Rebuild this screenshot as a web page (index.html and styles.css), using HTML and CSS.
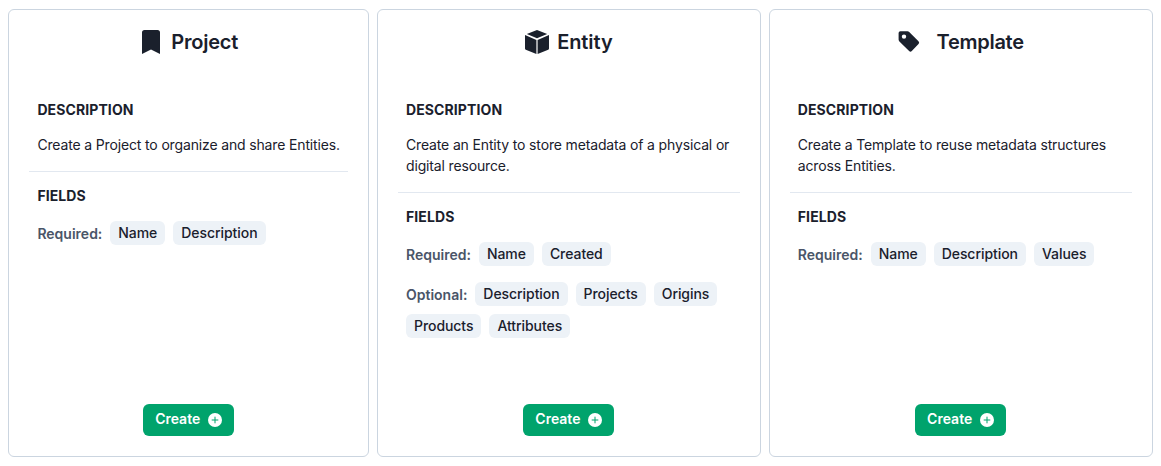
FILE: index.html
```html
<!DOCTYPE html>
<html lang="en">
<head>
<meta charset="utf-8">
<title>Create</title>
<link rel="stylesheet" href="styles.css">
</head>
<body>
<main class="cards">
  <section class="card">
    <header class="card-header">
      <svg class="icon" viewBox="0 0 24 24"><path d="M3 24V2.500Q3 0 5.500 0H18.500Q21 0 21 2.500V24L12 19.500Z"/></svg>
      <h2 class="title">Project</h2>
    </header>
    <div class="body">
      <div class="block">
        <h3 class="label">DESCRIPTION</h3>
        <p class="text">Create a Project to organize and share Entities.</p>
      </div>
      <div class="block">
        <h3 class="label">FIELDS</h3>
        <div class="fields"><span class="kind">Required:</span><span class="tag">Name</span><span class="tag">Description</span></div>
      </div>
    </div>
    <button class="create"><span class="create-text">Create</span><svg class="plus" viewBox="0 0 14 14"><circle cx="7" cy="7" r="7"/><path d="M7 3.700V10.300M3.700 7H10.300"/></svg></button>
  </section>
  <section class="card">
    <header class="card-header">
      <svg class="icon" viewBox="0 0 24 24"><path d="M12 0L22.200 3.900L12 8.300L1.800 3.900ZM0 5L11.400 9.900V24L.8 19.700Q0 19.300 0 18.500ZM24 5V18.500Q24 19.300 23.200 19.700L12.600 24V9.900Z"/></svg>
      <h2 class="title title-entity">Entity</h2>
    </header>
    <div class="body">
      <div class="block">
        <h3 class="label">DESCRIPTION</h3>
        <p class="text">Create an Entity to store metadata of a physical or digital resource.</p>
      </div>
      <div class="block">
        <h3 class="label">FIELDS</h3>
        <div class="fields"><span class="kind">Required:</span><span class="tag">Name</span><span class="tag">Created</span></div>
        <div class="fields"><span class="kind">Optional:</span><span class="tag">Description</span><span class="tag">Projects</span><span class="tag">Origins</span><span class="tag">Products</span><span class="tag">Attributes</span></div>
      </div>
    </div>
    <button class="create"><span class="create-text">Create</span><svg class="plus" viewBox="0 0 14 14"><circle cx="7" cy="7" r="7"/><path d="M7 3.700V10.300M3.700 7H10.300"/></svg></button>
  </section>
  <section class="card">
    <header class="card-header">
      <svg class="icon icon-wide" viewBox="0 0 31 24"><path fill-rule="evenodd" d="M.6 3Q.6 1.200 2.400 1.200H9.500Q10.500 1.200 11.200 1.900L20.500 11.200Q21.900 12.600 20.500 14L13.800 21.100Q12.500 22.400 11.100 21.100L1.400 11.400Q.6 10.600 .6 9.600ZM6 4.400A2.200 2.200 0 1 0 6 8.800A2.200 2.200 0 1 0 6 4.400Z"/></svg>
      <h2 class="title title-template">Template</h2>
    </header>
    <div class="body">
      <div class="block">
        <h3 class="label">DESCRIPTION</h3>
        <p class="text">Create a Template to reuse metadata structures across Entities.</p>
      </div>
      <div class="block">
        <h3 class="label">FIELDS</h3>
        <div class="fields"><span class="kind">Required:</span><span class="tag">Name</span><span class="tag">Description</span><span class="tag">Values</span></div>
      </div>
    </div>
    <button class="create"><span class="create-text">Create</span><svg class="plus" viewBox="0 0 14 14"><circle cx="7" cy="7" r="7"/><path d="M7 3.700V10.300M3.700 7H10.300"/></svg></button>
  </section>
</main>
</body>
</html>
```
FILE: styles.css
```css
* { box-sizing: border-box; margin: 0; }
body { background: #fff; color: #1a202c; font-family: Inter, sans-serif; font-size: 14px; line-height: 21px; }
.cards { display: grid; grid-template-columns: 360.6px 383.8px 383.8px; gap: 8px; padding: 9px 8px 9px 8.4px; height: 466px; }
.card { display: flex; flex-direction: column; align-items: center; border: 1px solid #cbd5e0; border-radius: 6px; padding: 20px; }
.card-header { display: flex; align-items: center; gap: 8px; height: 24px; }
.icon { width: 24px; height: 24px; fill: currentColor; }
.icon-wide { width: 31px; }
.title { font-size: 20px; line-height: 24px; font-weight: 600; letter-spacing: -.2px; }
.title-entity { letter-spacing: -.08px; }
.title-template { letter-spacing: -.28px; }
.body { align-self: stretch; flex: 1; padding-top: 37px; }
.block { display: flex; flex-direction: column; padding: 8px 8px 16px; }
.block + .block { border-top: 1px solid #e2e8f0; padding-top: 13px; }
.label { font-size: 14px; line-height: 21px; font-weight: 700; letter-spacing: .1px; }
.text { padding-top: 14px; letter-spacing: -.15px; }
.fields { display: flex; flex-wrap: wrap; align-items: center; gap: 8px; margin-top: 15px; }
.fields + .fields { margin-top: 16px; }
.kind { color: #4a5568; font-weight: 600; line-height: 22px; padding-top: 2px; }
.tag { height: 24px; border-radius: 6px; background: #edf2f7; padding: 0 8px; line-height: 24px; font-weight: 500; letter-spacing: -.06px; }
.create { display: flex; align-items: center; justify-content: center; gap: 8px; width: 91px; height: 32px; padding: 0; border: 0; border-radius: 6px; background: #00a36c; color: #fff; font: 600 14px/21px Inter, sans-serif; }
.create-text { padding-bottom: 3px; }
.plus { width: 14px; height: 14px; fill: #fff; stroke: #00a36c; }
.plus circle { stroke: none; }
```
